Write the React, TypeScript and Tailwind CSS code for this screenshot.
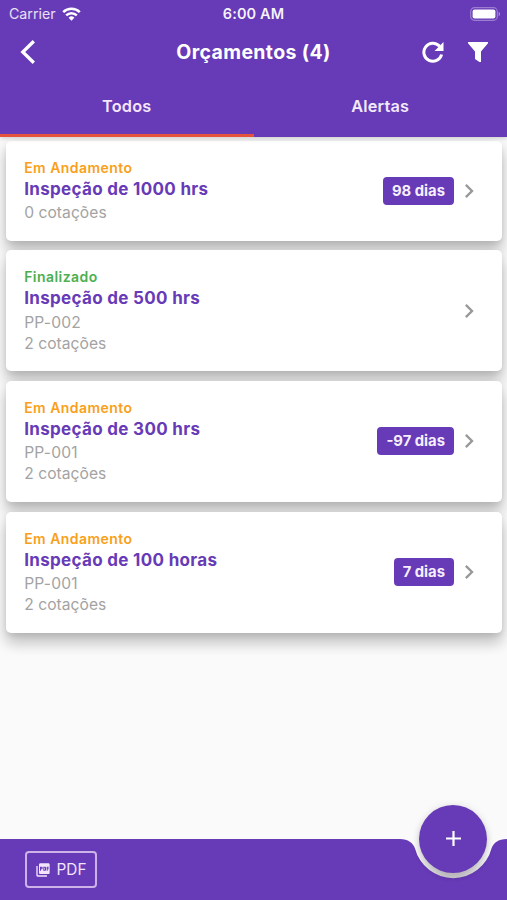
import { MdChevronRight, MdPictureAsPdf } from 'react-icons/md';
import clsx from 'clsx';
import { useState } from 'react';

type Quote = {
  id: number;
  status: 'Em Andamento' | 'Finalizado';
  title: string;
  prefix?: string;
  quotes: number;
  days?: number;
};

const quotes: Quote[] = [
  { id: 1, status: 'Em Andamento', title: 'Inspeção de 1000 hrs', quotes: 0, days: 98 },
  { id: 2, status: 'Finalizado', title: 'Inspeção de 500 hrs', prefix: 'PP-002', quotes: 2 },
  { id: 3, status: 'Em Andamento', title: 'Inspeção de 300 hrs', prefix: 'PP-001', quotes: 2, days: -97 },
  { id: 4, status: 'Em Andamento', title: 'Inspeção de 100 horas', prefix: 'PP-001', quotes: 2, days: 7 },
];

const tabs = ['Todos', 'Alertas'];

function StatusBar() {
  return (
    <div className="grid h-7 grid-cols-3 items-center pl-[9px] pr-[6px] text-[14.5px]">
      <div className="flex items-center gap-[6px] text-white/85">
        <span className="text-[14.2px]">Carrier</span>
        <svg className="h-[14px] w-[19px]" viewBox="0 0 19 14" fill="none" stroke="#fff" strokeWidth="2.5">
          <path d="M1.200 5.200a11.800 11.800 0 0 1 16.600 0" />
          <path d="M4.200 8.400a7.500 7.500 0 0 1 10.600 0" />
          <path d="M6.600 10.800a4.100 4.100 0 0 1 5.800 0L9.500 13.700z" fill="#fff" stroke="none" />
        </svg>
      </div>
      <span className="-ml-[3px] text-center font-semibold tracking-[0.1px] text-white/95">6:00 AM</span>
      <svg className="h-[14px] w-[31px] justify-self-end" viewBox="0 0 31 14">
        <rect x="0.7" y="0.7" width="26.6" height="12.6" rx="3.8" fill="none" stroke="#fff" strokeOpacity="0.35" strokeWidth="1.2" />
        <rect x="2.6" y="2.5" width="22.8" height="9" rx="2" fill="#fff" />
        <path d="M28.700 4.800c1.800.8 1.800 3.600 0 4.400z" fill="#fff" fillOpacity="0.5" />
      </svg>
    </div>
  );
}

function QuoteCard({ quote }: { quote: Quote }) {
  return (
    <li className="flex items-center rounded-[5px] bg-white pt-[17px] pr-[19px] pb-[17.6px] pl-[18.2px] shadow-[0_11px_14px_rgba(0,0,0,0.16),0_5px_18px_rgba(0,0,0,0.11),0_3px_5px_rgba(0,0,0,0.07)]">
      <div className="flex-1">
        <p
          className={clsx(
            'text-[14px] leading-5 font-semibold tracking-[0.45px]',
            quote.status === 'Finalizado' ? 'text-[#4caf50]' : 'text-[#f9a01b]',
          )}
        >
          {quote.status}
        </p>
        <h2 className="text-[17px] leading-[23.4px] font-bold tracking-[0.32px] text-[#673ab7]">{quote.title}</h2>
        {quote.prefix ? <p className="mt-px text-[15.6px] leading-[21px] tracking-[0.2px] text-[#a3a3a3]">{quote.prefix}</p> : null}
        <p className={clsx('text-[15.6px] leading-[21px] tracking-[0.05px] text-[#a3a3a3]', !quote.prefix && 'mt-[0.4px]')}>{quote.quotes} cotações</p>
      </div>
      {quote.days !== undefined ? (
        <span className="mr-px rounded-[4px] bg-[#673ab7] px-[9px] text-[14.8px] leading-7 font-bold text-[#f6effd]">
          {quote.days} dias
        </span>
      ) : null}
      <MdChevronRight className="h-7 w-7 text-[#999]" />
    </li>
  );
}

export default function App() {
  const [activeTab, setActiveTab] = useState('Todos');

  return (
    <div className="flex h-[900px] w-[507px] flex-col overflow-hidden bg-[#fafafa] font-['Inter',sans-serif]">
      <header className="z-10 bg-[#673ab7] text-white shadow-[0_1px_5px_rgba(0,0,0,0.2)]">
        <StatusBar />
        <div className="grid h-12 grid-cols-[100px_1fr_100px] items-center">
          <button className="pl-5" type="button" aria-label="Voltar">
            <svg className="h-6 w-4" viewBox="0 0 16 24" fill="none" stroke="currentColor" strokeWidth="3.3">
              <path d="M13.800 1.200 2.800 12l11 10.800" />
            </svg>
          </button>
          <h1 className="pt-px text-center text-[19.5px] font-bold tracking-[0.35px]">Orçamentos (4)</h1>
          <div className="flex items-center justify-end gap-[24px] pr-[19px]">
            <button type="button" aria-label="Atualizar">
              <svg className="h-[22px] w-[22px]" viewBox="0 0 22 22" fill="none" stroke="currentColor" strokeWidth="3">
                <path d="M17.600 5.300A9 9 0 1 0 19.600 13.500" />
                <path d="M21.500 1v9h-9z" fill="currentColor" stroke="none" />
              </svg>
            </button>
            <button type="button" aria-label="Filtrar">
              <svg className="h-5 w-5" viewBox="0 0 20 20" fill="currentColor">
                <path d="M0 0h20v1.200l-7 8.300V20h-1.600L7 17V9.500L0 1.200z" />
              </svg>
            </button>
          </div>
        </div>
        <nav className="grid h-[60.5px] grid-cols-2">
          {tabs.map((tab) => (
            <button
              key={tab}
              className={clsx(
                'border-b-[3px] pt-[2px] text-[16.3px] font-semibold tracking-[0.2px]',
                activeTab === tab ? 'border-[#e5533d] text-[#f6e6fb]' : 'border-transparent text-[#f3eafb]',
              )}
              onClick={() => setActiveTab(tab)}
              type="button"
            >
              {tab}
            </button>
          ))}
        </nav>
      </header>

      <main className="flex-1 pt-[4.8px] pr-[5px] pl-[6px]">
        <ul className="space-y-[9.7px]">
          {quotes.map((quote) => <QuoteCard key={quote.id} quote={quote} />)}
        </ul>
      </main>

      <footer className="relative h-[61px]">
        {/* bar with the notch around the floating button */}
        <svg className="absolute inset-0 h-full w-full" viewBox="0 0 507 61" fill="#673ab7">
          <defs>
            <linearGradient id="notch" x1="0" y1="0" x2="0" y2="1">
              <stop offset="0" stopColor="#fafafa" stopOpacity="0" />
              <stop offset="1" stopColor="#cbc8cf" />
            </linearGradient>
          </defs>
          <path d="M414 8h79v33h-79z" fill="url(#notch)" />
          <path d="M0 0H400C408 0 413 4 415 9.500A39.500 39.500 0 0 0 491.500 9.500C493.500 4 498 0 507 0V61H0z" />
        </svg>
        <button
          className="relative mt-[12px] ml-[25px] flex h-[37px] w-[72px] items-center justify-center gap-[6px] rounded-[4px] border-2 border-[#cdb3ea] pt-px pr-px text-[15.3px] text-[#f3e5fb]"
          type="button"
        >
          <MdPictureAsPdf className="h-4 w-4" />
          PDF
        </button>
        <button
          className="absolute -top-[34.5px] right-5 flex h-[68px] w-[68px] items-center justify-center rounded-full bg-[#673ab7] text-white shadow-[0_4px_6px_rgba(0,0,0,0.12),0_1px_8px_rgba(0,0,0,0.12)]"
          type="button"
          aria-label="Novo orçamento"
        >
          <svg className="h-[15px] w-[15px]" viewBox="0 0 15 15" fill="none" stroke="currentColor" strokeWidth="2.2">
            <path d="M7.500 0v15M0 7.500h15" />
          </svg>
        </button>
      </footer>
    </div>
  );
}
